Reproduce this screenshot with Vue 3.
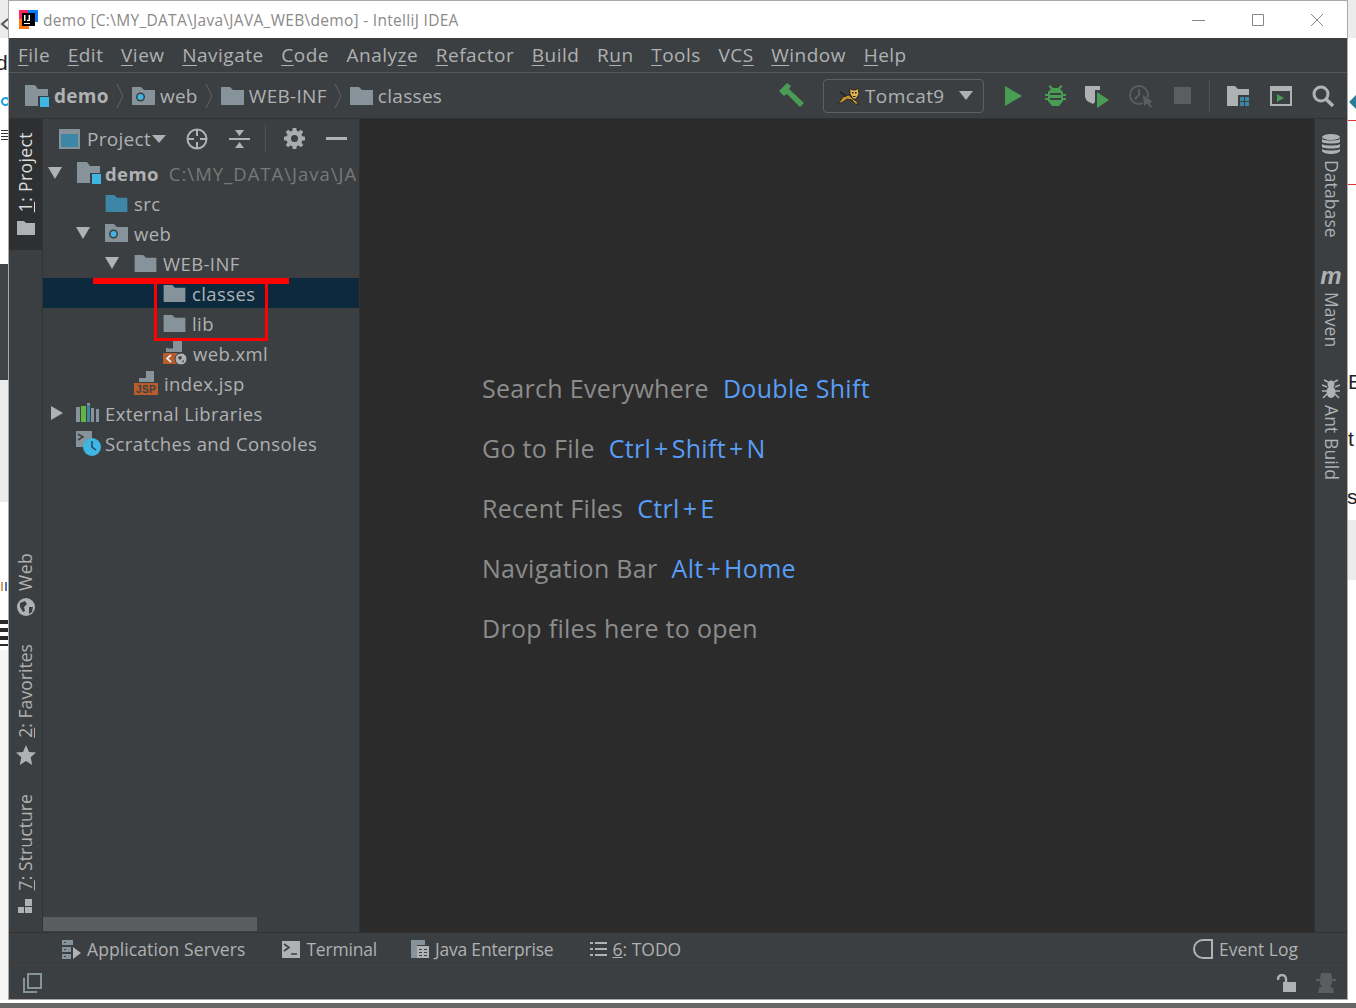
<script setup>
const menus = [
  { pre: '', key: 'F', post: 'ile' },
  { pre: '', key: 'E', post: 'dit' },
  { pre: '', key: 'V', post: 'iew' },
  { pre: '', key: 'N', post: 'avigate' },
  { pre: '', key: 'C', post: 'ode' },
  { pre: 'Analy', key: 'z', post: 'e' },
  { pre: '', key: 'R', post: 'efactor' },
  { pre: '', key: 'B', post: 'uild' },
  { pre: 'R', key: 'u', post: 'n' },
  { pre: '', key: 'T', post: 'ools' },
  { pre: 'VC', key: 'S', post: '' },
  { pre: '', key: 'W', post: 'indow' },
  { pre: '', key: 'H', post: 'elp' }
]

const tree = [
  { id: 'demo', indent: 5, arrow: 'down', icon: 'module', label: 'demo', hint: 'C:\\MY_DATA\\Java\\JA' },
  { id: 'src', indent: 62, icon: 'src', label: 'src' },
  { id: 'web', indent: 33, arrow: 'down', icon: 'web', label: 'web' },
  { id: 'inf', indent: 62, arrow: 'down', icon: 'folder', label: 'WEB-INF' },
  { id: 'classes', indent: 120, icon: 'folder', label: 'classes', selected: true },
  { id: 'lib', indent: 120, icon: 'folder', label: 'lib' },
  { id: 'xml', indent: 120, icon: 'xml', label: 'web.xml' },
  { id: 'jsp', indent: 91, icon: 'jsp', label: 'index.jsp' },
  { id: 'ext', indent: 5, arrow: 'right', icon: 'libs', label: 'External Libraries' },
  { id: 'scr', indent: 33, icon: 'scratch', label: 'Scratches and Consoles' }
]

const hints = [
  { text: 'Search Everywhere', keys: ['Double Shift'] },
  { text: 'Go to File', keys: ['Ctrl', 'Shift', 'N'] },
  { text: 'Recent Files', keys: ['Ctrl', 'E'] },
  { text: 'Navigation Bar', keys: ['Alt', 'Home'] },
  { text: 'Drop files here to open', keys: [] }
]
</script>

<template>
  <div class="screen">
    <svg class="sprites" width="0" height="0">
      <defs>
        <symbol id="folder" viewBox="0 0 23 18">
          <path fill="#87939a" d="M0 0h9l3 3h11v15H0z" />
        </symbol>
        <symbol id="folder-blue" viewBox="0 0 23 18">
          <path fill="#3d86a6" d="M0 0h9l3 3h11v15H0z" />
        </symbol>
        <symbol id="folder-web" viewBox="0 0 23 18">
          <path fill="#87939a" d="M0 0h9l3 3h11v15H0z" />
          <circle cx="8.500" cy="10" r="4.500" fill="#3c3f41" />
          <circle cx="8.500" cy="10" r="3" fill="#3eb5e3" />
        </symbol>
        <symbol id="module" viewBox="0 0 24 22">
          <path fill="#87939a" d="M0 0h10l3 4h10v17H0z" />
          <path fill="#3c3f41" d="M13 11h11v11H13z" />
          <path fill="#3eb5e3" d="M15 12h9v10h-9z" />
        </symbol>
        <symbol id="gear" viewBox="0 0 24 24">
          <path fill="#a9abad" fill-rule="evenodd" d="M10 1h4l.6 3.200 2 .8L19.300 3 22 5.700l-2 2.700.8 2 3.200.6v4l-3.200.6-.8 2 2 2.700-2.700 2.700-2.700-2-2 .8L14 25h-4l-.6-3.200-2-.8L4.700 23 2 20.300l2-2.700-.8-2L0 15v-4l3.200-.6.8-2-2-2.700L4.700 3l2.700 2 2-.8zM12 9a4 4 0 1 0 0 8 4 4 0 0 0 0-8z" transform="translate(0 -1)" />
        </symbol>
      </defs>
    </svg>

    <div class="desktop-bits">
      <span class="bit bit-top-l"></span>
      <span class="bit bit-top-r"></span>
      <span class="bit bit-x">
        <svg width="9" height="12" viewBox="0 0 9 12"><path fill="none" stroke="#555" stroke-width="2" d="M8 1L2 6l6 5" /></svg>
      </span>
      <span class="bit bit-d">d</span>
      <span class="bit bit-o"></span>
      <span class="bit bit-kanji"></span>
      <span class="bit bit-dark"></span>
      <span class="bit bit-pale"></span>
      <span class="bit bit-lines"></span>
      <span class="bit bit-tick"></span>
      <span class="bit bit-left-low"></span>
      <span class="bit bit-rule1"></span>
      <span class="bit bit-rule2"></span>
      <span class="bit bit-r-pale"></span>
      <span class="bit bit-r1">E</span>
      <span class="bit bit-r2">t</span>
      <span class="bit bit-r3">s</span>
      <span class="bit bit-arrow"></span>
    </div>

    <div class="window">
      <header class="titlebar">
        <svg class="app-logo" width="19" height="19" viewBox="0 0 19 19">
          <path fill="#fe2857" d="M0 0h10v10H0z" />
          <path fill="#087cfa" d="M9 0h10v12H9z" />
          <path fill="#fe7a16" d="M0 9h10v10H0z" />
          <path fill="#000" d="M3 3h13v13H3z" />
          <path fill="#fff" d="M5 5h1.500v6H5zM8 5h3v6H8v-1.200h1.600V5zM5 13h6v1H5z" />
        </svg>
        <span class="title-text">demo [C:\MY_DATA\Java\JAVA_WEB\demo] - IntelliJ IDEA</span>
        <div class="win-controls">
          <svg width="14" height="14" viewBox="0 0 14 14"><path stroke="#888" d="M0 7.500h13" /></svg>
          <svg width="14" height="14" viewBox="0 0 14 14"><path fill="none" stroke="#888" d="M1.500 1.500h11v11h-11z" /></svg>
          <svg width="14" height="14" viewBox="0 0 14 14"><path stroke="#888" d="M1 1l12 12M13 1L1 13" /></svg>
        </div>
      </header>

      <nav class="menubar">
        <span v-for="m in menus" :key="m.key + m.post" class="menu-item">{{ m.pre }}<u>{{ m.key }}</u>{{ m.post }}</span>
      </nav>

      <div class="navbar">
        <div class="crumbs">
          <svg class="c-demo" width="24" height="22"><use href="#module" /></svg>
          <b class="crumb crumb-root">demo</b>
          <svg class="chev" width="8" height="26" viewBox="0 0 8 26"><path fill="none" stroke="#5f6365" d="M1 1l6 12-6 12" /></svg>
          <svg width="23" height="18"><use href="#folder-web" /></svg>
          <span class="crumb">web</span>
          <svg class="chev" width="8" height="26" viewBox="0 0 8 26"><path fill="none" stroke="#5f6365" d="M1 1l6 12-6 12" /></svg>
          <svg width="23" height="18"><use href="#folder" /></svg>
          <span class="crumb">WEB-INF</span>
          <svg class="chev" width="8" height="26" viewBox="0 0 8 26"><path fill="none" stroke="#5f6365" d="M1 1l6 12-6 12" /></svg>
          <svg width="23" height="18"><use href="#folder" /></svg>
          <span class="crumb">classes</span>
        </div>

        <div class="actions">
          <svg class="a-hammer" width="25" height="25" viewBox="0 0 25 25">
            <path fill="#499c54" d="M0 8l8-8 4 3-2 3 15 14-4 4L8 11l-3 2z" />
          </svg>
          <div class="run-combo">
            <svg width="24" height="18" viewBox="0 0 24 18">
              <path fill="#c8922a" stroke="#1c1c1c" stroke-width=".8" d="M1 17l5-7 6-2 4 4 2 1 4 4h-4l-3-4-5-1-4 3z" />
              <path fill="none" stroke="#1c1c1c" stroke-width="1.400" d="M3 5l6 4" />
              <path fill="#e3b552" stroke="#1c1c1c" stroke-width=".8" d="M13 1l2 2h4l2-2 1 6-3 5h-3l-3-5z" />
              <path fill="#1c1c1c" d="M15 5h1.500v1.500H15zM18 5h1.500v1.500H18zM16 9h2.500v1H16z" />
            </svg>
            <span>Tomcat9</span>
            <i class="combo-caret"></i>
          </div>
          <svg class="a-play" width="18" height="20" viewBox="0 0 18 20"><path fill="#499c54" d="M0 0l17 10L0 20z" /></svg>
          <svg class="a-bug" width="21" height="22" viewBox="0 0 21 22">
            <path fill="#499c54" d="M5 0l3 3h5l3-3 1.500 1.500L15 4l3 3v2h3v2h-3v2h3v2h-3v1l-4 5H7l-4-5v-1H0v-2h3v-2H0V9h3V7l3-3-2.500-2.500z" />
            <path fill="#3c3f41" d="M5 8h11v2H5zM5 13h11v2H5z" />
          </svg>
          <svg class="a-cover" width="25" height="24" viewBox="0 0 25 24">
            <path fill="#afb1b3" d="M0 2h15v4h-5v12l-2 2-6-3-2-4z" />
            <path fill="#499c54" d="M12 8l12 8-12 8z" />
          </svg>
          <svg class="a-profile" width="26" height="24" viewBox="0 0 26 24">
            <circle cx="10" cy="11" r="9" fill="none" stroke="#5b5e60" stroke-width="2" />
            <path fill="none" stroke="#5b5e60" stroke-width="2" d="M10 5v6l-4 4" />
            <path fill="#5b5e60" stroke="#3c3f41" d="M13 10l12 8-4 1 3 4-3 1-3-4-3 3z" />
          </svg>
          <i class="a-stop"></i>
          <i class="a-sep"></i>
          <svg class="a-struct" width="22" height="20" viewBox="0 0 22 20">
            <path fill="#afb1b3" d="M0 0h8l3 3h11v6H11v11H0z" />
            <path fill="#3d86a6" d="M13 11h4v4h-4zM18 11h4v4h-4zM13 16h4v4h-4zM18 16h4v4h-4z" />
          </svg>
          <svg class="a-term" width="22" height="20" viewBox="0 0 22 20">
            <path fill="none" stroke="#afb1b3" stroke-width="2" d="M1 1h20v18H1z" />
            <path fill="#afb1b3" d="M1 1h20v4H1z" />
            <path fill="#499c54" d="M7 8l7 4-7 4z" />
          </svg>
          <svg class="a-search" width="22" height="22" viewBox="0 0 22 22">
            <circle cx="9" cy="9" r="7" fill="none" stroke="#afb1b3" stroke-width="3" />
            <path stroke="#afb1b3" stroke-width="3.500" d="M14 14l7 7" />
          </svg>
        </div>
      </div>

      <div class="workspace">
        <aside class="strip strip-left">
          <div class="strip-group">
            <div class="tool tool-active">
              <span class="v-left"><u>1</u>: Project</span>
              <svg width="18" height="14" viewBox="0 0 18 14"><path fill="#afb1b3" d="M0 0h7l2 2h9v12H0z" /></svg>
            </div>
          </div>
          <div class="strip-group">
            <div class="tool t-web">
              <span class="v-left">Web</span>
              <svg width="18" height="18" viewBox="0 0 18 18">
                <circle cx="9" cy="9" r="9" fill="#afb1b3" />
                <path fill="#3c3f41" d="M3 5l5-2 2 3-3 3 1 4-2 1-3-5zM12 9l4 0-1 5-3 2z" />
              </svg>
            </div>
            <div class="tool t-fav">
              <span class="v-left"><u>2</u>: Favorites</span>
              <svg width="20" height="20" viewBox="0 0 20 20"><path fill="#afb1b3" d="M10 0l3 7 7 .6-5.300 4.700L16.200 20 10 16l-6.200 4 1.500-7.700L0 7.600 7 7z" /></svg>
            </div>
            <div class="tool t-struct">
              <span class="v-left"><u>7</u>: Structure</span>
              <svg width="15" height="15" viewBox="0 0 15 15"><path fill="#afb1b3" d="M7 0h7v7H7zM0 8h6v6H0zM7 8h7v6H7z" /></svg>
            </div>
          </div>
        </aside>

        <section class="project">
          <div class="project-head">
            <svg class="ph-win" width="21" height="20" viewBox="0 0 21 20">
              <path fill="#87939a" d="M0 0h21v20H0z" />
              <path fill="#3d86a6" d="M2 5h17v13H2z" />
            </svg>
            <span class="ph-title">Project</span>
            <i class="ph-caret"></i>
            <svg class="ph-target" width="22" height="22" viewBox="0 0 22 22">
              <circle cx="11" cy="11" r="9.500" fill="none" stroke="#afb1b3" stroke-width="2" />
              <path stroke="#afb1b3" stroke-width="2" d="M11 2v6M11 14v6M2 11h6M14 11h6" />
            </svg>
            <svg class="ph-collapse" width="21" height="22" viewBox="0 0 21 22">
              <path fill="#afb1b3" d="M0 10h21v2H0zM6 2h9l-4.500 6zM10.500 14L15 20H6z" />
            </svg>
            <i class="ph-sep"></i>
            <svg class="ph-gear" width="21" height="21" viewBox="0 0 24 24"><use href="#gear" /></svg>
            <i class="ph-minus"></i>
          </div>

          <div class="tree">
            <div
              v-for="row in tree"
              :key="row.id"
              class="row"
              :class="{ selected: row.selected }"
              :style="{ paddingLeft: row.indent + 'px' }"
            >
              <i v-if="row.arrow" class="arrow" :class="row.arrow"></i>
              <svg v-if="row.icon === 'module'" class="ico ico-module" width="24" height="22"><use href="#module" /></svg>
              <svg v-else-if="row.icon === 'src'" class="ico" width="23" height="17"><use href="#folder-blue" /></svg>
              <svg v-else-if="row.icon === 'web'" class="ico" width="23" height="18"><use href="#folder-web" /></svg>
              <svg v-else-if="row.icon === 'folder'" class="ico" width="23" height="17"><use href="#folder" /></svg>
              <svg v-else-if="row.icon === 'xml'" class="ico" width="24" height="24" viewBox="0 0 24 24">
                <path fill="#87939a" d="M10 0h9v11H3V7h7z" />
                <path fill="#3c3f41" d="M4 8h6V2z" opacity=".5" />
                <path fill="#b85c2b" d="M0 12h14v11H0z" />
                <path fill="none" stroke="#e8e8e8" stroke-width="1.800" d="M8 14l-4 3.500L8 21" />
                <circle cx="18" cy="18" r="6" fill="#afb1b3" stroke="#3c3f41" />
                <path fill="#3c3f41" d="M15 16l3-1 1 2-2 2-1-1zM19 20l2-1-1 3z" />
              </svg>
              <svg v-else-if="row.icon === 'jsp'" class="ico" width="24" height="24" viewBox="0 0 24 24">
                <path fill="#87939a" d="M12 0h8v11H5V7h7z" />
                <path fill="#b85c2b" d="M0 12h24v12H0z" />
                <text x="12" y="22" text-anchor="middle" class="jsp-text">JSP</text>
              </svg>
              <svg v-else-if="row.icon === 'libs'" class="ico" width="23" height="20" viewBox="0 0 23 20">
                <path fill="#87939a" d="M0 4h4v15H0zM11 0h3v19h-3zM15 5h3v14h-3zM20 6h3v13h-3z" />
                <path fill="#62b543" d="M5 3h5v16H5z" />
                <path fill="#3d86a6" d="M11 2h3v17h-3z" />
              </svg>
              <svg v-else-if="row.icon === 'scratch'" class="ico ico-scratch" width="25" height="25" viewBox="0 0 25 25">
                <path fill="#87939a" d="M0 0h16v9l-7 7H0z" />
                <path fill="none" stroke="#3c3f41" stroke-width="1.500" d="M2 3l5 3-5 3" />
                <circle cx="16" cy="16" r="9" fill="#3eb5e3" />
                <path fill="none" stroke="#22485a" stroke-width="1.500" d="M16 10v6l4 3" />
              </svg>
              <component :is="row.id === 'demo' ? 'b' : 'span'" class="row-label">{{ row.label }}</component>
              <span v-if="row.hint" class="row-hint">{{ row.hint }}</span>
            </div>
          </div>

          <div class="tree-scroll"><i></i></div>
        </section>

        <main class="editor">
          <p v-for="h in hints" :key="h.text" class="hint">
            {{ h.text }}<span v-if="h.keys.length" class="hint-key"><template v-for="(k, i) in h.keys" :key="k"><span v-if="i" class="plus">+</span>{{ k }}</template></span>
          </p>
        </main>

        <aside class="strip strip-right">
          <div class="r-tool r-db">
            <svg width="18" height="20" viewBox="0 0 18 20">
              <ellipse cx="9" cy="3" rx="9" ry="3" fill="#afb1b3" />
              <path fill="#afb1b3" d="M0 5c2 2 16 2 18 0v3c-2 2-16 2-18 0zM0 10c2 2 16 2 18 0v3c-2 2-16 2-18 0zM0 15c2 2 16 2 18 0v2c-2 4-16 4-18 0z" />
            </svg>
            <span class="v-right">Database</span>
          </div>
          <div class="r-tool r-maven">
            <span class="maven-m">m</span>
            <span class="v-right">Maven</span>
          </div>
          <div class="r-tool r-ant">
            <svg width="18" height="20" viewBox="0 0 18 20">
              <ellipse cx="9" cy="5" rx="3.500" ry="3.500" fill="#afb1b3" />
              <ellipse cx="9" cy="13" rx="4.500" ry="6" fill="#afb1b3" />
              <path fill="none" stroke="#afb1b3" stroke-width="1.600" d="M6 3L2 1M12 3l4-2M5 8L0 6M13 8l5-2M5 12H0M13 12h5M5 15l-4 4M13 15l4 4" />
            </svg>
            <span class="v-right">Ant Build</span>
          </div>
        </aside>

        <i class="mark mark-line"></i>
        <i class="mark mark-box"></i>
      </div>

      <div class="toolstrip">
        <div class="bt bt-servers">
          <svg width="19" height="20" viewBox="0 0 19 20">
            <path fill="#87939a" d="M0 1h11v5H0zM0 8h9v5H0zM0 15h9v5H0z" />
            <path fill="#3c3f41" d="M2 3h2v1H2zM2 10h2v1H2zM2 17h2v1H2z" />
            <path fill="#afb1b3" d="M11 8l8 6-8 6z" />
          </svg>
          <span>Application Servers</span>
        </div>
        <div class="bt bt-term">
          <svg width="18" height="17" viewBox="0 0 18 17">
            <path fill="#afb1b3" d="M0 0h18v17H0z" />
            <path fill="none" stroke="#3c3f41" stroke-width="1.600" d="M2 3l5 3.500L2 10M9 13h6" />
          </svg>
          <span>Terminal</span>
        </div>
        <div class="bt bt-je">
          <svg width="18" height="18" viewBox="0 0 18 18">
            <path fill="#87939a" d="M0 0h14v5H6v13H0z" />
            <path fill="#afb1b3" d="M6 6h12v12H6z" />
            <path fill="#3c3f41" d="M8 9h3v1H8zM8 12h3v1H8zM8 15h3v1H8zM13 9h3v1h-3zM13 12h3v1h-3zM13 15h3v1h-3z" />
          </svg>
          <span>Java Enterprise</span>
        </div>
        <div class="bt bt-todo">
          <svg width="17" height="14" viewBox="0 0 17 14">
            <path fill="#afb1b3" d="M0 0h3v2H0zM5 0h12v2H5zM0 6h3v2H0zM5 6h12v2H5zM0 12h3v2H0zM5 12h12v2H5z" />
          </svg>
          <span><u>6</u>: TODO</span>
        </div>
        <div class="bt bt-log">
          <svg width="20" height="20" viewBox="0 0 20 20">
            <path fill="none" stroke="#afb1b3" stroke-width="2" d="M10 1h9v18h-9a9 9 0 0 1 0-18z" />
          </svg>
          <span>Event Log</span>
        </div>
      </div>

      <footer class="statusbar">
        <svg width="20" height="20" viewBox="0 0 20 20">
          <path fill="none" stroke="#87939a" stroke-width="2" d="M5 1h13v14H5zM1 5v14h13" />
        </svg>
        <div class="status-right">
          <svg width="19" height="18" viewBox="0 0 19 18">
            <path fill="#afb1b3" d="M6 8h13v10H6z" />
            <path fill="none" stroke="#afb1b3" stroke-width="2.400" d="M1 6V5a4 4 0 0 1 8 0v3" />
          </svg>
          <svg width="20" height="20" viewBox="0 0 20 20">
            <path fill="#5b5e60" d="M5 0h10l1 6h4v2h-4v3l-2 2 3 2 1 5H2l1-5 3-2-2-2V8H0V6h4z" />
          </svg>
        </div>
      </footer>
    </div>
  </div>
</template>

<style>
html, body {
  margin: 0;
  background: #fff;
}
</style>

<style scoped>
.screen {
  position: relative;
  width: 1356px;
  height: 1008px;
  overflow: hidden;
  background: #fff;
  font-family: "Open Sans", "Noto Sans", sans-serif;
}

.screen::after {
  content: '';
  position: absolute;
  left: 0;
  right: 0;
  bottom: 0;
  height: 5px;
  background: #666;
}

.sprites {
  position: absolute;
}

/* bits of the desktop behind the window */
.bit {
  position: absolute;
  color: #222;
  font-family: "Liberation Sans", sans-serif;
  font-size: 21px;
  line-height: 1;
}
.bit-top-l { left: 0; top: 0; width: 9px; height: 38px; background: #ececec; }
.bit-top-r { left: 1347px; top: 0; width: 9px; height: 38px; background: #ececec; }
.bit-x { left: 0; top: 12px; }
.bit-d { left: -4px; top: 52px; }
.bit-o { left: 1px; top: 97px; width: 9px; height: 9px; box-sizing: border-box; border: 2px solid #1da1e6; border-radius: 50%; }
.bit-kanji { left: 1px; top: 130px; width: 8px; height: 12px; background: repeating-linear-gradient(#333 0 1px, #fff 1px 3px); }
.bit-dark { left: 0; top: 264px; width: 9px; height: 116px; background: #3f4345; }
.bit-pale { left: 0; top: 380px; width: 9px; height: 122px; background: #ececec; }
.bit-lines { left: 0; top: 620px; width: 9px; height: 26px; background: repeating-linear-gradient(#2a2a2a 0 4px, #fff 4px 8px); }
.bit-tick { left: 1px; top: 582px; width: 8px; height: 9px; background: linear-gradient(90deg, #e69c52 0 2px, #fff 2px 4px, #3f7fc0 4px 6px, #fff 6px); }
.bit-left-low { left: 0; top: 650px; width: 9px; height: 350px; background: #f5f5f5; }
.bit-rule1 { left: 1347px; top: 120px; width: 9px; height: 1px; background: #d33; }
.bit-rule2 { left: 1347px; top: 184px; width: 9px; height: 1px; background: #d33; }
.bit-r-pale { left: 1347px; top: 520px; width: 9px; height: 60px; background: #ececec; }
.bit-r1 { left: 1348px; top: 371px; }
.bit-r2 { left: 1348px; top: 428px; }
.bit-r3 { left: 1347px; top: 486px; }
.bit-arrow { left: 1349px; top: 95px; width: 7px; height: 14px; background: #2d7d9a; clip-path: polygon(0 50%, 100% 0, 100% 100%); }

.window {
  position: absolute;
  left: 9px;
  top: 1px;
  width: 1338px;
  height: 998px;
  display: flex;
  flex-direction: column;
  background: #3c3f41;
  box-shadow: 0 0 0 1px #a9a9a9;
}

.titlebar {
  height: 37px;
  flex: none;
  display: flex;
  align-items: center;
  background: #fff;
  padding-left: 10px;
}
.app-logo { margin-right: 5px; }
.title-text {
  color: #8a8a8a;
  font-size: 15.500px;
  letter-spacing: .3px;
}
.win-controls {
  margin-left: auto;
  display: flex;
  gap: 45px;
  padding-right: 23px;
}

.menubar {
  height: 34px;
  flex: none;
  display: flex;
  align-items: center;
  gap: 17.600px;
  padding-left: 9px;
  border-bottom: 1px solid #55585a;
  color: #afb1b3;
  font-size: 19px;
  letter-spacing: .5px;
}
.menu-item u { text-underline-offset: 3px; }

.navbar {
  height: 45px;
  flex: none;
  display: flex;
  align-items: center;
  justify-content: space-between;
  border-bottom: 1px solid #323232;
  color: #afb1b3;
}
.crumbs {
  display: flex;
  align-items: center;
  padding-left: 16px;
  font-size: 19px;
  letter-spacing: .3px;
}
.crumb { margin-left: 5px; }
.chev { margin: 0 7.500px; }

.actions {
  position: relative;
  display: flex;
  align-items: center;
  padding-right: 13px;
}
.actions > * { flex: none; }
.run-combo {
  display: flex;
  align-items: center;
  width: 161px;
  height: 34px;
  box-sizing: border-box;
  margin-left: 19px;
  padding-left: 13px;
  gap: 4px;
  border: 1px solid #5e6060;
  border-radius: 4px;
  font-size: 19px;
  letter-spacing: .4px;
}
.combo-caret {
  margin-left: 10px;
  border: 7px solid transparent;
  border-top: 9px solid #afb1b3;
  border-bottom: 0;
}
.a-play { margin-left: 21px; }
.a-bug { margin-left: 22px; }
.a-cover { margin-left: 19px; }
.a-profile { margin-left: 19px; }
.a-stop { width: 17px; height: 17px; margin-left: 19px; background: #5b5e60; }
.a-sep { width: 1px; height: 32px; margin-left: 18px; background: #515354; }
.a-struct { margin-left: 17px; }
.a-term { margin-left: 21px; }
.a-search { margin-left: 20px; }

.workspace {
  position: relative;
  flex: 1;
  min-height: 0;
  display: flex;
}

.strip {
  flex: none;
  width: 33px;
  display: flex;
  flex-direction: column;
  color: #afb1b3;
  font-size: 17.500px;
}
.strip-left {
  justify-content: space-between;
  border-right: 1px solid #323232;
}
.strip-right {
  width: 32px;
  border-left: 1px solid #323232;
  letter-spacing: .1px;
}
.tool {
  display: flex;
  flex-direction: column;
  align-items: center;
}
.tool-active {
  height: 131px;
  box-sizing: border-box;
  padding-top: 13px;
  gap: 9px;
  background: #2d2f30;
  color: #dcdcdc;
  letter-spacing: .4px;
}
.t-web { gap: 7px; letter-spacing: .4px; }
.t-fav { margin-top: 28px; gap: 7px; letter-spacing: .05px; }
.t-struct { margin-top: 29px; gap: 9px; margin-bottom: 18px; letter-spacing: .1px; }
.v-left {
  writing-mode: vertical-rl;
  transform: rotate(180deg);
  line-height: 33px;
}
.v-right {
  writing-mode: vertical-rl;
  line-height: 31px;
}
.r-tool {
  display: flex;
  flex-direction: column;
  align-items: center;
}
.r-db { margin-top: 15px; gap: 6px; }
.r-maven { margin-top: 30px; gap: 8px; }
.r-ant { margin-top: 32px; gap: 6px; }
.maven-m {
  font-family: "Liberation Sans", sans-serif;
  font-style: italic;
  font-weight: 700;
  font-size: 24px;
  line-height: 16px;
  height: 16px;
  color: #afb1b3;
}

.project {
  flex: none;
  width: 316px;
  display: flex;
  flex-direction: column;
  border-right: 1px solid #323232;
  overflow: hidden;
  color: #afb1b3;
}
.project-head {
  height: 39px;
  flex: none;
  display: flex;
  align-items: center;
  padding-left: 16px;
  font-size: 19px;
  letter-spacing: .3px;
}
.ph-title { margin-left: 7px; }
.ph-caret {
  margin-left: 1px;
  border: 7px solid transparent;
  border-top: 8px solid #afb1b3;
  border-bottom: 0;
}
.ph-target { margin-left: 20px; }
.ph-collapse { margin-left: 21px; }
.ph-sep { width: 1px; height: 28px; margin-left: 15px; background: #515354; }
.ph-gear { margin-left: 18px; }
.ph-minus { width: 21px; height: 3px; margin-left: 21px; background: #afb1b3; }

.tree { flex: 1; }
.row {
  position: relative;
  height: 30px;
  display: flex;
  align-items: center;
  overflow: hidden;
  white-space: nowrap;
  font-size: 18.500px;
  letter-spacing: .4px;
}
.row.selected { background: #0d293e; }
.arrow {
  flex: none;
  width: 0;
  height: 0;
  margin-right: 15px;
  border: 7px solid transparent;
}
.arrow.down {
  border-top: 12px solid #afb1b3;
  border-bottom: 0;
}
.arrow.right {
  margin-left: 3px;
  margin-right: 13px;
  border-left: 12px solid #afb1b3;
  border-right: 0;
}
.ico { flex: none; }
.ico-module { margin-right: -2px; }
.ico-scratch { margin-right: -2px; }
.row-label { margin-left: 6px; }
.row-hint {
  margin-left: 10px;
  color: #787878;
  letter-spacing: 1px;
}
.jsp-text {
  fill: #3c3f41;
  font-family: "Liberation Sans", sans-serif;
  font-size: 10px;
  font-weight: 700;
}

.tree-scroll {
  height: 15px;
  flex: none;
}
.tree-scroll i {
  display: block;
  width: 214px;
  height: 14px;
  background: #5a5c5e;
}

.editor {
  flex: 1;
  background: #2b2b2b;
  padding: 252px 0 0 122px;
  color: #8c8c8c;
  font-size: 25px;
  letter-spacing: .3px;
}
.hint {
  margin: 0 0 26px;
  height: 34px;
  line-height: 34px;
}
.hint-key {
  margin-left: 14px;
  color: #589df6;
}
.plus { margin: 0 3px; }

.mark {
  position: absolute;
  pointer-events: none;
}
.mark-line {
  left: 84px;
  top: 159px;
  width: 196px;
  height: 6px;
  background: #f00;
}
.mark-box {
  left: 145px;
  top: 161px;
  width: 114px;
  height: 61px;
  box-sizing: border-box;
  border: 3px solid #f00;
  border-top: 0;
}

.toolstrip {
  position: relative;
  height: 32px;
  flex: none;
  display: flex;
  align-items: center;
  border-top: 1px solid #323232;
  border-bottom: 1px solid #45413f;
  color: #afb1b3;
  font-size: 17.500px;
}
.bt {
  display: flex;
  align-items: center;
  gap: 6px;
}
.bt-servers { margin-left: 53px; letter-spacing: .1px; }
.bt-term { margin-left: 37px; letter-spacing: -.2px; }
.bt-je { margin-left: 34px; letter-spacing: -.2px; }
.bt-todo { margin-left: 36px; }
.bt-log { margin-left: auto; margin-right: 49px; }

.statusbar {
  height: 33px;
  flex: none;
  display: flex;
  align-items: center;
  justify-content: space-between;
  padding: 0 11px 0 14px;
}
.status-right {
  display: flex;
  align-items: center;
  gap: 20px;
}
</style>
